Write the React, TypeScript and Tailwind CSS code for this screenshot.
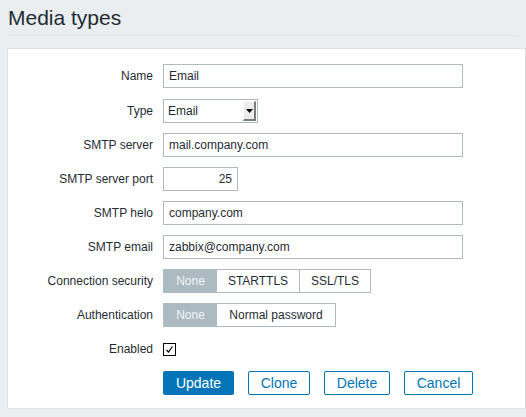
import React from 'react';

const labelCls = 'w-[144px] shrink-0 text-right text-[12px] text-[#1f2c33]';
const inputCls =
  'h-[24px] border border-[#acbbc2] bg-white px-[5px] text-[12px] text-[#1f2c33] outline-none';

function Row({ label, className = '', children }: { label: string; className?: string; children: React.ReactNode }) {
  return (
    <div className={`flex h-[24px] items-center gap-[10px] ${className}`}>
      <div className={labelCls}>{label}</div>
      {children}
    </div>
  );
}

function Segmented({ options, widths }: { options: string[]; widths: string[] }) {
  return (
    <div className="flex h-[24px] border border-[#acbbc2] bg-white text-[12px]">
      {options.map((opt, i) => (
        <div
          key={opt}
          className={`flex items-center justify-center ${widths[i]} ${
            i === 0 ? 'bg-[#acbbc2] text-[#f2f4f5]' : 'text-[#1f2c33]'
          } ${i > 1 ? 'border-l border-[#acbbc2]' : ''}`}
        >
          {opt}
        </div>
      ))}
    </div>
  );
}

export default function App() {
  return (
    <div className="min-h-[417px] bg-[#ebeef0] font-['Liberation_Sans',Arial,sans-serif] text-[#1f2c33]">
      {/* Header */}
      <div className="mx-[7px] flex h-[36px] items-center border-b border-[#dde2e5] pl-[1px]">
        <h1 className="text-[21px] leading-none text-[#1f2c33]">Media types</h1>
      </div>

      {/* Form panel */}
      <div className="pl-[7px] pt-[12px] pb-[7px]">
        <div className="flex flex-col gap-[10px] border border-[#dde2e5] bg-white pb-[13px] pl-[1px] pt-[15px]">
          <Row label="Name">
            <input className={`${inputCls} w-[300px]`} defaultValue="Email" />
          </Row>

          <Row label="Type" className="mt-[1px]">
            <div className="relative flex h-[24px] w-[95px] items-center border border-[#acbbc2] bg-white pl-[4px] text-[12px]">
              Email
              <div className="absolute right-[1px] top-[1px] flex h-[20px] w-[13px] items-center justify-center border-b-2 border-r-2 border-l border-t border-b-[#7b7b7b] border-r-[#7b7b7b] border-l-white border-t-white bg-[#ececec]">
                <svg width="7" height="4" viewBox="0 0 7 4">
                  <path d="M0 0 L7 0 L3.5 4 Z" fill="#000" />
                </svg>
              </div>
            </div>
          </Row>

          <Row label="SMTP server">
            <input className={`${inputCls} w-[300px]`} defaultValue="mail.company.com" />
          </Row>

          <Row label="SMTP server port">
            <input className={`${inputCls} w-[75px] text-right`} defaultValue="25" />
          </Row>

          <Row label="SMTP helo">
            <input className={`${inputCls} w-[300px]`} defaultValue="company.com" />
          </Row>

          <Row label="SMTP email">
            <input className={`${inputCls} w-[300px]`} defaultValue="zabbix@company.com" />
          </Row>

          <Row label="Connection security">
            <Segmented options={['None', 'STARTTLS', 'SSL/TLS']} widths={['w-[53px]', 'w-[82px]', 'w-[71px]']} />
          </Row>

          <Row label="Authentication">
            <Segmented options={['None', 'Normal password']} widths={['w-[53px]', 'w-[118px]']} />
          </Row>

          <Row label="Enabled">
            <div className="flex h-[13px] w-[13px] items-center justify-center border border-black bg-white">
              <svg width="9" height="9" viewBox="0 0 9 9">
                <path d="M1.5 5 L3.5 7 L7.5 1.5" fill="none" stroke="#000" strokeWidth="1.2" />
              </svg>
            </div>
          </Row>

          <div className="flex h-[24px] items-center gap-[14px] pl-[154px] text-[14px]">
            <button className="h-[24px] w-[71px] rounded-[2px] bg-[#0275b8] text-white">Update</button>
            <button className="h-[24px] w-[62px] rounded-[2px] border border-[#0275b8] bg-white text-[#0275b8]">
              Clone
            </button>
            <button className="h-[24px] w-[66px] rounded-[2px] border border-[#0275b8] bg-white text-[#0275b8]">
              Delete
            </button>
            <button className="h-[24px] w-[69px] rounded-[2px] border border-[#0275b8] bg-white text-[#0275b8]">
              Cancel
            </button>
          </div>
        </div>
      </div>
    </div>
  );
}
